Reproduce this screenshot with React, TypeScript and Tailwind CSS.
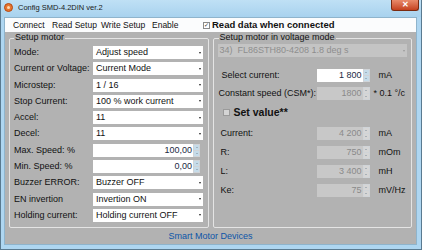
import React from "react";

const font = { fontFamily: '"Liberation Sans", Arial, sans-serif' };

function Arrow() {
  return (
    <div className="w-[7px] h-full flex items-center justify-center">
      <div className="w-0 h-0 border-l-[1.5px] border-r-[1.5px] border-t-[2px] border-l-transparent border-r-transparent border-t-[#222]" />
    </div>
  );
}

function Combo({ value }: { value: string }) {
  return (
    <div className="w-[110px] h-[13px] bg-white flex items-center">
      <span className="flex-1 pl-[3px] truncate leading-none">{value}</span>
      <Arrow />
    </div>
  );
}

function Spin({ value, disabled, w = "w-[107px]" }: { value: string; disabled?: boolean; w?: string }) {
  return (
    <div className={`${w} h-[13px] flex items-center`}>
      <div
        className={`flex-1 h-full flex items-center justify-end pr-[1px] leading-none ${
          disabled ? "bg-[#c8c8c8] text-[#8a8a8a]" : "bg-white text-[#1a2a44]"
        }`}
      >
        {value}
      </div>
      <div className="w-[7px] h-full flex flex-col gap-[1px] bg-[#d0d4d8] p-[1px]">
        <div className={`flex-1 ${disabled ? "bg-[#d6d6d6]" : "bg-[#c6dcea]"} flex items-center justify-center`}>
          <div className="w-0 h-0 border-l-[1.5px] border-r-[1.5px] border-b-[1.5px] border-l-transparent border-r-transparent border-b-[#7a8a98]" />
        </div>
        <div className={`flex-1 ${disabled ? "bg-[#d6d6d6]" : "bg-[#c6dcea]"} flex items-center justify-center`}>
          <div className="w-0 h-0 border-l-[1.5px] border-r-[1.5px] border-t-[1.5px] border-l-transparent border-r-transparent border-t-[#7a8a98]" />
        </div>
      </div>
    </div>
  );
}

const leftRows: { label: string; value: string; spin?: boolean }[] = [
  { label: "Mode:", value: "Adjust speed" },
  { label: "Current or Voltage:", value: "Current Mode" },
  { label: "Microstep:", value: "1 / 16" },
  { label: "Stop Current:", value: "100 % work current" },
  { label: "Accel:", value: "11" },
  { label: "Decel:", value: "11" },
  { label: "Max. Speed: %", value: "100,00", spin: true },
  { label: "Min. Speed: %", value: "0,00", spin: true },
  { label: "Buzzer ERROR:", value: "Buzzer OFF" },
  { label: "EN invertion", value: "Invertion ON" },
  { label: "Holding current:", value: "Holding current OFF" },
];

const motorRows = [
  { label: "Current:", value: "4 200", unit: "mA" },
  { label: "R:", value: "750", unit: "mOm" },
  { label: "L:", value: "3 400", unit: "mH" },
  { label: "Ke:", value: "75", unit: "mV/Hz" },
];

export default function App() {
  return (
    <div
      className="w-[422px] h-[250px] bg-[#aed6f1] flex flex-col overflow-hidden text-[9px] text-[#111] whitespace-nowrap border-l border-r border-b border-[#5a7a90]"
      style={font}
    >
      {/* Title bar */}
      <div className="h-[17px] flex items-start bg-gradient-to-b from-[#bfe0f5] to-[#a8d2ee] shrink-0">
        <div className="mt-[3px] ml-[3px] w-[9px] h-[9px] rounded-full bg-[#e8752e] border border-[#b44a14] flex items-center justify-center">
          <div className="w-[3px] h-[3px] rounded-full bg-[#ffd9b0]" />
        </div>
        <span className="ml-[5px] mt-[4px] text-[7.5px] leading-none text-[#1a1a1a]">Config SMD-4.2DIN ver.2</span>
        <div className="ml-auto mr-[2px] w-[28px] h-[11px] bg-gradient-to-b from-[#e88a6a] to-[#c4401c] border border-[#7a2a10] border-t-0 rounded-b-[3px] flex items-center justify-center text-white text-[8px] font-bold leading-none">
          ✕
        </div>
      </div>

      <div className="flex-1 flex flex-col ml-[3px] mr-[4px] mb-[6px] border border-[#8fb4cc]">
        {/* Menu bar */}
        <div className="h-[14px] bg-[#fbfcfd] flex items-center shrink-0 text-[8.5px] leading-none">
          <span className="ml-[8px] w-[39px]">Connect</span>
          <span className="w-[49px]">Read Setup</span>
          <span className="w-[51px]">Write Setup</span>
          <span className="w-[51px]">Enable</span>
          <div className="w-[7px] h-[7px] border border-[#8a8a8a] bg-white flex items-center justify-center text-[6px] leading-none text-[#333]">
            ✓
          </div>
          <span className="ml-[2px] font-bold text-[9.5px]">Read data when connected</span>
        </div>

        {/* Body */}
        <div className="flex-1 bg-[#b2b2b2] flex flex-col px-[4px] pt-[6px]">
          <div className="flex gap-[4px] h-[190px]">
            {/* Left group */}
            <div className="w-[201px] border border-[#e4e4e4] rounded-[2px] relative pt-[7px] px-[4px]">
              <span className="absolute -top-[6px] left-[4px] px-[1px] bg-[#b2b2b2] text-[9px] leading-none">
                Setup motor
              </span>
              <div className="flex flex-col gap-[3.3px]">
                {leftRows.map((r) => (
                  <div key={r.label} className="flex items-center h-[13px]">
                    <span className="w-[79px] leading-none">{r.label}</span>
                    {r.spin ? <Spin value={r.value} /> : <Combo value={r.value} />}
                  </div>
                ))}
              </div>
            </div>

            {/* Right group */}
            <div className="w-[201px] border border-[#e4e4e4] rounded-[2px] relative pt-[5px] px-[4px]">
              <span className="absolute -top-[6px] left-[5px] px-[1px] bg-[#b2b2b2] text-[9px] leading-none">
                Setup motor in voltage mode
              </span>
              <div className="h-[13px] bg-[#c4c4c4] flex items-center text-[#8e8e8e]">
                <span className="flex-1 pl-[2px] leading-none">34)&nbsp; FL86STH80-4208 1.8 deg s</span>
                <div className="w-[7px] flex items-center justify-center">
                  <div className="w-0 h-0 border-l-[1.5px] border-r-[1.5px] border-t-[2px] border-l-transparent border-r-transparent border-t-[#999]" />
                </div>
              </div>

              <div className="flex items-center h-[14px] mt-[11px] pl-[4px]">
                <span className="w-[95px] leading-none">Select current:</span>
                <Spin value="1 800" w="w-[53px]" />
                <span className="ml-[9px] leading-none">mA</span>
              </div>
              <div className="flex items-center h-[13px] mt-[5px] pl-[1px]">
                <span className="w-[98px] leading-none">Constant speed (CSM*):</span>
                <Spin value="1800" disabled w="w-[53px]" />
                <span className="ml-[4px] leading-none">* 0.1 °/c</span>
              </div>
              <div className="flex items-center mt-[7px] pl-[5px]">
                <div className="w-[7px] h-[7px] border border-[#9a9a9a] bg-[#d4d4d4]" />
                <span className="ml-[4px] font-bold text-[10.5px] leading-none">Set value**</span>
              </div>

              <div className="flex flex-col gap-[6px] mt-[9px] pl-[3px]">
                {motorRows.map((r) => (
                  <div key={r.label} className="flex items-center h-[13px]">
                    <span className="w-[96px] leading-none">{r.label}</span>
                    <Spin value={r.value} disabled w="w-[53px]" />
                    <span className="ml-[9px] leading-none">{r.unit}</span>
                  </div>
                ))}
              </div>
            </div>
          </div>

          <div className="flex-1 flex items-center justify-center pt-[2px] text-[9px] text-[#0c55a8]">
            Smart Motor Devices
          </div>
        </div>
      </div>
    </div>
  );
}
